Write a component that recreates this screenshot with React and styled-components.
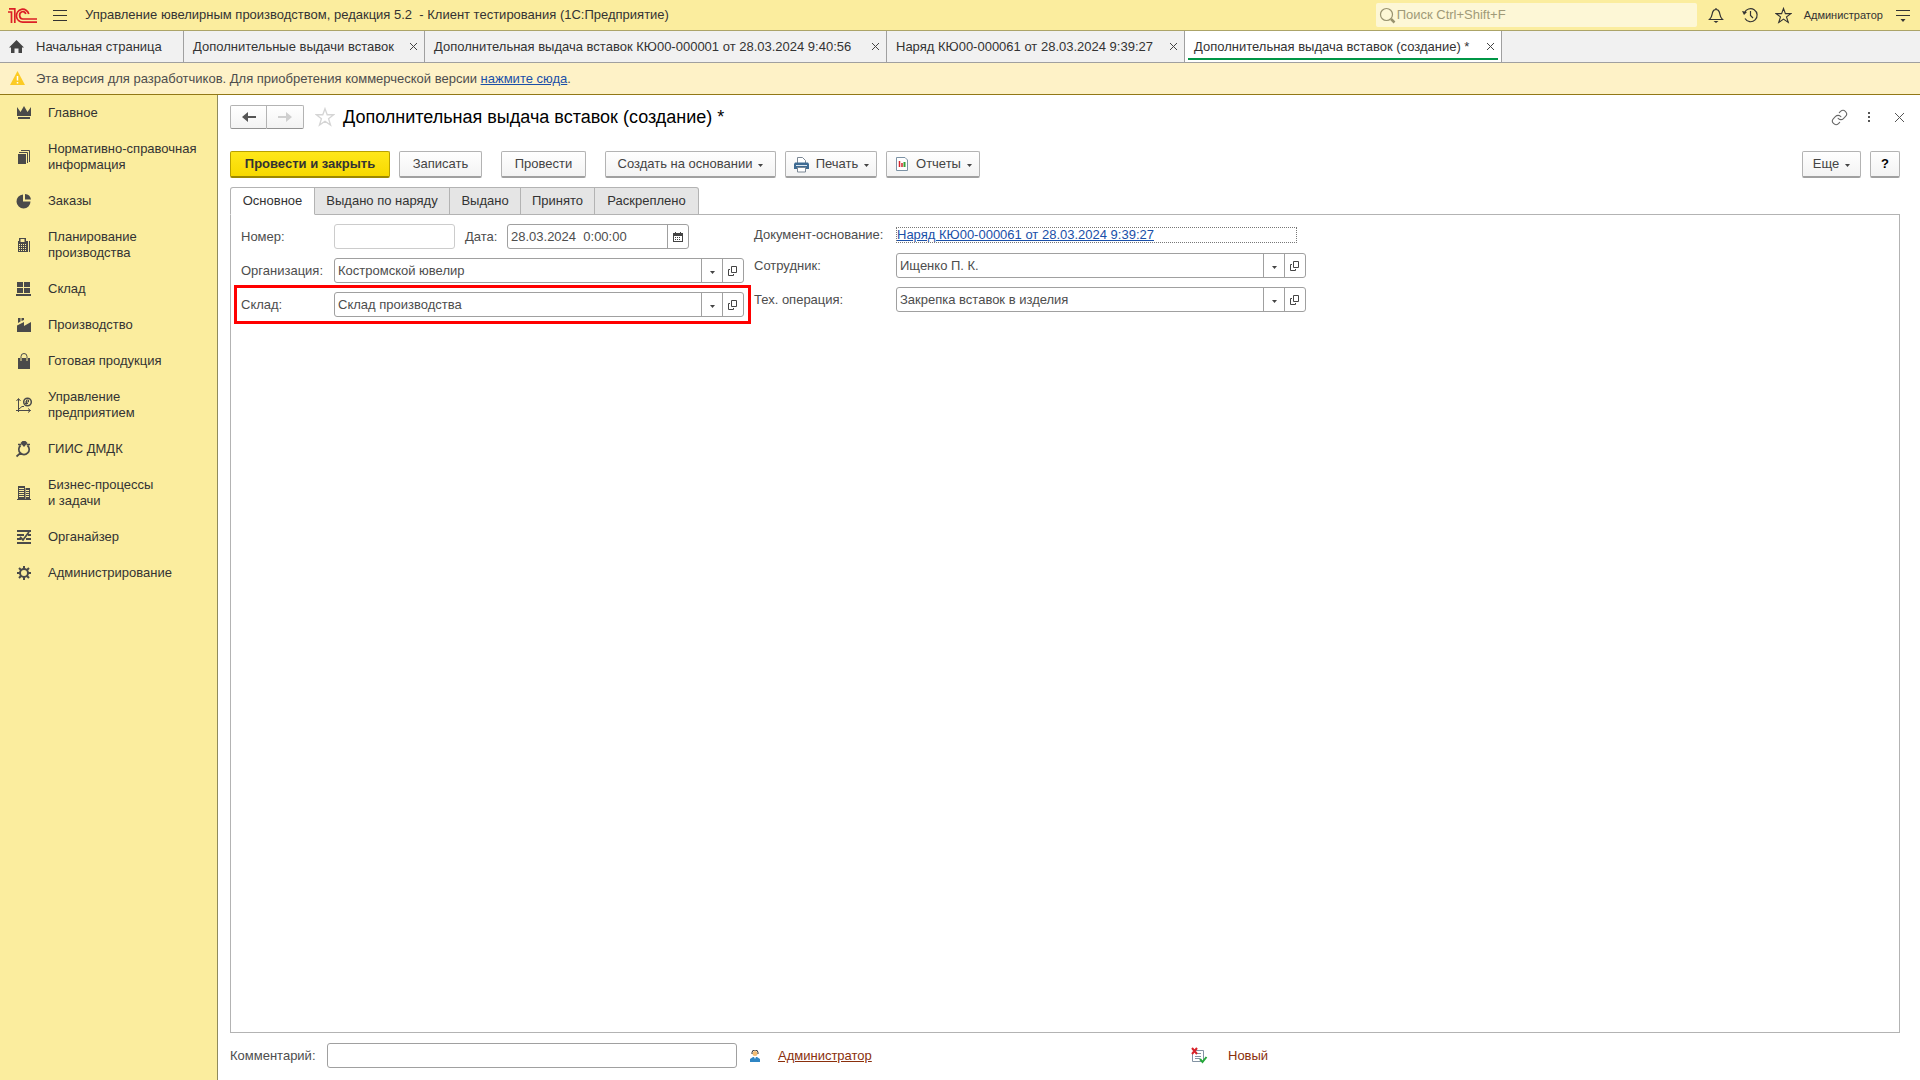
import React from 'react';
import styled, { createGlobalStyle } from 'styled-components';
import { Link as ChainIcon } from 'lucide-react';

const GlobalStyle = createGlobalStyle`
  * { box-sizing: border-box; }
  body {
    margin: 0;
    font-family: "Liberation Sans", Arial, sans-serif;
    font-size: 13px;
    line-height: 16px;
    color: #333;
    background: #fff;
  }
  button, input { font: inherit; color: inherit; }
`;

const Page = styled.div`
  display: flex;
  flex-direction: column;
  min-height: 100vh;
`;

const TopBar = styled.header`
  display: flex;
  align-items: center;
  height: 31px;
  padding: 0 5px 0 8px;
  background: #fbed9e;
  border-bottom: 1px solid #aca468;
`;

const IconButton = styled.button`
  display: flex;
  align-items: center;
  justify-content: center;
  width: ${({ $width }) => $width || 24}px;
  height: 24px;
  padding: 0;
  border: 0;
  background: none;
  color: ${({ $color }) => $color || '#333'};
`;

const AppTitle = styled.span`
  flex: 1;
  margin-left: 3px;
  white-space: pre;
`;

const SearchBox = styled.label`
  display: flex;
  align-items: center;
  width: 321px;
  height: 24px;
  padding: 0 3px;
  margin-right: 7px;
  border-radius: 2px;
  background: #fdf7d6;
  color: #98926f;
`;

const SearchInput = styled.input`
  flex: 1;
  min-width: 0;
  padding: 0 0 0 1px;
  border: 0;
  background: none;
  &::placeholder { color: #a09a78; opacity: 1; }
`;

const UserButton = styled.button`
  padding: 0 8px;
  border: 0;
  background: none;
  font-size: 11px;
`;

const WindowTabs = styled.nav`
  display: flex;
  height: 32px;
  background: #f1f1f1;
  border-bottom: 1px solid #a0a0a0;
`;

const WindowTab = styled.div`
  position: relative;
  display: flex;
  align-items: center;
  justify-content: space-between;
  min-width: ${({ $width }) => $width}px;
  padding: 0 3px 0 9px;
  border-right: 1px solid #a0a0a0;
  background: ${({ $active }) => ($active ? '#fff' : 'transparent')};
  &::after {
    content: '';
    display: ${({ $active }) => ($active ? 'block' : 'none')};
    position: absolute;
    left: 3px;
    right: 3px;
    bottom: 2px;
    height: 2px;
    background: #009646;
  }
`;

const TabLink = styled.a`
  display: flex;
  align-items: center;
  gap: 12px;
  color: #333;
  text-decoration: none;
  white-space: nowrap;
`;

const TabClose = styled.button`
  display: flex;
  align-items: center;
  justify-content: center;
  width: 16px;
  height: 16px;
  padding: 0;
  border: 0;
  background: none;
  color: #444;
`;

const Notice = styled.div`
  display: flex;
  align-items: center;
  gap: 11px;
  height: 32px;
  padding: 0 10px;
  background: #fef2c7;
  border-bottom: 1px solid #927816;
  color: #4d4d4d;
`;

const Link = styled.a`
  color: ${({ $color }) => $color || '#1a4fa8'};
  text-decoration: underline;
`;

const Body = styled.div`
  display: flex;
  flex: 1;
`;

const Sidebar = styled.nav`
  width: 218px;
  flex-shrink: 0;
  background: #fbed9e;
  border-right: 1px solid #8f8a5c;
`;

const SideLink = styled.a`
  display: flex;
  align-items: center;
  gap: 15px;
  padding: 10px 12px 10px 15px;
  color: #333;
  text-decoration: none;
  white-space: pre-line;
  svg {
    flex-shrink: 0;
    margin: -1px 0;
  }
`;

const Main = styled.main`
  display: flex;
  flex: 1;
  flex-direction: column;
  min-width: 0;
  padding: 10px 20px 12px 12px;
`;

const HeaderRow = styled.div`
  display: flex;
  align-items: center;
  height: 24px;
`;

const NavButtons = styled.div`
  display: flex;
  margin-right: 10px;
`;

const NavButton = styled.button`
  display: flex;
  align-items: center;
  justify-content: center;
  width: 37px;
  height: 24px;
  padding: 0;
  border: 1px solid #b3b3b3;
  border-bottom-color: #929292;
  border-radius: ${({ $last }) => ($last ? '0 2px 2px 0' : '2px 0 0 2px')};
  border-left-width: ${({ $last }) => ($last ? 0 : 1)}px;
  background: linear-gradient(#fff, #f3f3f3);
  color: ${({ $last }) => ($last ? '#cfcfcf' : '#555')};
`;

const Title = styled.h1`
  flex: 1;
  margin: 0 0 0 7px;
  font-size: 18px;
  line-height: 22px;
  font-weight: normal;
  color: #000;
`;

const HeaderTools = styled.div`
  display: flex;
  gap: 6px;
  margin-right: -11px;
`;

const Toolbar = styled.div`
  display: flex;
  align-items: center;
  gap: 9px;
  margin: 22px 0 9px;
`;

const Button = styled.button`
  display: flex;
  align-items: center;
  justify-content: center;
  gap: 6px;
  min-width: ${({ $width }) => $width}px;
  height: 27px;
  padding: 0 6px;
  margin-left: ${({ $apart }) => ($apart ? 10 : 0)}px;
  border: 1px solid #b3b3b3;
  border-bottom: 2px solid #a0a0a0;
  border-radius: 2px;
  background: linear-gradient(#fff, #f3f3f3);
  color: #444;
  white-space: nowrap;
`;

const PrimaryButton = styled(Button)`
  border-color: #b8a000;
  border-bottom-color: #9c8800;
  background: linear-gradient(#ffe71a, #f7d900);
  color: #333;
  font-weight: bold;
`;

const HelpButton = styled(Button)`
  color: #000;
  font-weight: bold;
`;

const Spacer = styled.div`
  flex: 1;
`;

const FormTabs = styled.div`
  display: flex;
  position: relative;
  margin-bottom: -1px;
`;

const FormTab = styled.button`
  min-width: ${({ $width }) => $width}px;
  height: 28px;
  padding: 0;
  border: 1px solid #b3b3b3;
  border-bottom-color: ${({ $active }) => ($active ? '#fff' : '#b3b3b3')};
  border-left-width: ${({ $first }) => ($first ? 1 : 0)}px;
  border-radius: ${({ $first, $last }) => ($first ? '3px 0 0 0' : $last ? '0 3px 0 0' : 0)};
  background: ${({ $active }) => ($active ? '#fff' : '#e5e5e5')};
`;

const Panel = styled.section`
  display: flex;
  flex: 1;
  align-items: flex-start;
  border: 1px solid #b3b3b3;
  padding: 9px 3px;
`;

const Column = styled.div`
  display: flex;
  flex-direction: column;
  width: ${({ $width }) => $width}px;
`;

const Row = styled.div`
  display: flex;
  align-items: center;
  height: ${({ $height }) => $height}px;
  padding: 0 ${({ $narrow }) => ($narrow ? 3 : 7)}px;
  color: #4d4d4d;
`;

const MarkedRow = styled(Row)`
  height: 39px;
  margin-top: -7px;
  padding: 0 4px;
  border: 3px solid #f00;
`;

const Label = styled.label`
  width: ${({ $width }) => $width}px;
  margin-left: ${({ $gap }) => $gap || 0}px;
  flex-shrink: 0;
  white-space: nowrap;
`;

const Field = styled.div`
  display: flex;
  width: ${({ $width }) => $width}px;
  height: 25px;
  border: 1px solid ${({ $light }) => ($light ? '#ccc' : '#a0a0a0')};
  border-radius: 3px;
  background: #fff;
`;

const Input = styled.input`
  flex: 1;
  min-width: 0;
  padding: 0 3px;
  border: 0;
  background: none;
  outline: none;
`;

const FieldButton = styled.button`
  display: flex;
  align-items: center;
  justify-content: center;
  width: 21px;
  padding: 0;
  border: 0;
  border-left: 1px solid #a0a0a0;
  background: none;
  color: #444;
`;

const BaseLink = styled(Link)`
  width: 401px;
  height: 16px;
  border: 1px dotted #777;
  line-height: 14px;
`;

const Footer = styled.footer`
  display: flex;
  align-items: center;
  padding-top: 10px;
  color: #4d4d4d;
`;

const Author = styled.div`
  display: flex;
  align-items: center;
  gap: 17px;
  width: 442px;
  margin-left: 12px;
`;

const State = styled.div`
  display: flex;
  align-items: center;
  gap: 20px;
  color: #8a2f0c;
`;

const Svg = ({ size = 16, children, ...rest }) => (
  <svg width={size} height={size} viewBox={`0 0 ${size} ${size}`} fill="none" aria-hidden="true" {...rest}>
    {children}
  </svg>
);

const Caret = () => (
  <svg width="5" height="10" viewBox="0 0 5 10" aria-hidden="true">
    <path d="M0 5h5L2.500 8z" fill="#444" />
  </svg>
);

const CloseIcon = ({ size = 9 }) => (
  <Svg size={size} stroke="currentColor">
    <path d={`M1 1L${size - 1} ${size - 1}M${size - 1} 1L1 ${size - 1}`} />
  </Svg>
);

const LogoIcon = () => (
  <svg width="30" height="18" viewBox="0 0 30 18" fill="none" stroke="#dc1f26" strokeWidth="1.700" aria-hidden="true">
    <path d="M0 6H3.500V17M1 2.800H6.800V17" />
    <path d="M20.800 8A6.300 6.500 0 1 0 15 16.200H29" />
    <path d="M17.800 8A3.200 3.700 0 1 0 15 13H29" />
  </svg>
);

const StarIcon = ({ size = 18 }) => (
  <svg width={size} height={size} viewBox="0 0 18 18" fill="none" stroke="currentColor" strokeWidth="1.200" aria-hidden="true">
    <path d="M9 1.500L11 7H16.800L12.200 10.500L14 16.300L9 12.800L4 16.300L5.800 10.500L1.200 7H7z" />
  </svg>
);

const OpenIcon = () => (
  <Svg size={10} stroke="#444">
    <path d="M3.500 .5H8.500V6.500H3.500zM2 3.500H.5V9.500H5.500V8" />
  </Svg>
);

const sections = [
  {
    text: 'Главное',
    icon: <path d="M2 3L5.500 8L9 2L12.500 8L16 3V12H2zM3 13H15V15H3z" />,
  },
  {
    text: 'Нормативно-справочная\nинформация',
    icon: (
      <>
        <path d="M3 6H11V16H3z" />
        <path d="M4 4.500H12.500V15M6 2.500H14.500V14" fill="none" stroke="#4a4a4a" />
      </>
    ),
  },
  {
    text: 'Заказы',
    icon: <path d="M8 2.500V9.500H15.500A7 7 0 1 1 8 2.500zM10 2A6.500 6.500 0 0 1 16 7.500H10z" />,
  },
  {
    text: 'Планирование\nпроизводства',
    icon: (
      <>
        <path d="M4 2H11V5H13V16H3V5H4zM5.500 3V6H9.500V3z" fillRule="evenodd" />
        <path d="M14 5H15V16H14z" />
        <path d="M4 8.500H12M4 10.500H12M4 12.500H12M4 14.500H12" stroke="#fbed9e" strokeDasharray="1 1" />
      </>
    ),
  },
  {
    text: 'Склад',
    icon: <path d="M2 2H8V7H2zM9 2H15V7H9zM2 8H8V13H2zM9 8H15V13H9zM1 14H16V16H1z" />,
  },
  {
    text: 'Производство',
    icon: (
      <>
        <path d="M2 16V9.500L9 6V10L16 6V16z" />
        <path d="M3 2H5.500V5.500L3 7zM6.500 2H9V4L6.500 5z" />
      </>
    ),
  },
  {
    text: 'Готовая продукция',
    icon: (
      <>
        <path d="M3 6H15V17H3z" />
        <path d="M6 7V4.500A3 3 0 0 1 12 4.500V7" fill="none" stroke="#4a4a4a" />
        <path d="M6 6V9M12 6V9" stroke="#fbed9e" />
      </>
    ),
  },
  {
    text: 'Управление\nпредприятием',
    icon: (
      <>
        <path d="M3.500 16V3M1.500 5L3.500 2.500L5.500 5M1 14.500H15.500M13 12.500L15.500 14.500L13 16.500M4 13L7 10.500L9 10.500" fill="none" stroke="#4a4a4a" />
        <circle cx="12.500" cy="6" r="3.800" fill="none" stroke="#4a4a4a" strokeWidth="1.500" />
        <path d="M11.500 8.500V4H13.500V6H10M10 7.500H13" fill="none" stroke="#4a4a4a" />
      </>
    ),
  },
  {
    text: 'ГИИС ДМДК',
    icon: (
      <>
        <path d="M5.500 3L7.500 1H10.500L12.500 3L9 7z" />
        <path d="M5.500 5.500A5.200 5.200 0 1 0 12.500 5.500M5.500 13L1.500 16.500M3 4.500H6.500M11.500 4.500H15" fill="none" stroke="#4a4a4a" strokeWidth="1.700" />
      </>
    ),
  },
  {
    text: 'Бизнес-процессы\nи задачи',
    icon: (
      <>
        <path d="M3 2H10V4H15V15H16V16H2V15H3z" />
        <path d="M4 4.500H9M4 6.500H9M4 8.500H9M4 10.500H9M4 12.500H9M11 6.500H14M11 8.500H14M11 10.500H14M11 12.500H14" stroke="#fbed9e" />
        <path d="M10.500 4V15" stroke="#fbed9e" strokeWidth=".5" />
      </>
    ),
  },
  {
    text: 'Органайзер',
    icon: (
      <>
        <path d="M2 2H16V4H2zM2 6H9V8H2zM13 6H16V8H13zM2 10H6V12H2zM11 10H16V12H11zM2 14H16V16H2z" />
        <path d="M5 9L8 12L14 4" fill="none" stroke="#4a4a4a" strokeWidth="1.800" />
      </>
    ),
  },
  {
    text: 'Администрирование',
    icon: (
      <>
        <circle cx="9" cy="9" r="4" fill="none" stroke="#4a4a4a" strokeWidth="2" />
        <path d="M9 2V5M9 13V16M2 9H5M13 9H16M4 4L6 6M12 12L14 14M4 14L6 12M12 6L14 4" stroke="#4a4a4a" strokeWidth="2" />
      </>
    ),
  },
];

const windows = [
  { text: 'Дополнительные выдачи вставок', width: 241 },
  { text: 'Дополнительная выдача вставок КЮ00-000001 от 28.03.2024 9:40:56', width: 462 },
  { text: 'Наряд КЮ00-000061 от 28.03.2024 9:39:27', width: 298 },
  { text: 'Дополнительная выдача вставок (создание) *', width: 317 },
];

const formTabs = [
  { text: 'Основное', width: 85 },
  { text: 'Выдано по наряду', width: 135 },
  { text: 'Выдано', width: 71 },
  { text: 'Принято', width: 74 },
  { text: 'Раскреплено', width: 104 },
];

const RefField = ({ id, value }) => (
  <Field $width={410}>
    <Input id={id} defaultValue={value} />
    <FieldButton aria-label="Выбрать"><Caret /></FieldButton>
    <FieldButton aria-label="Открыть"><OpenIcon /></FieldButton>
  </Field>
);

const Header = () => (
  <TopBar>
    <LogoIcon />
    <IconButton $width={44} aria-label="Меню">
      <Svg size={14} stroke="#333"><path d="M0 2.500H14M0 7.500H14M0 12.500H14" /></Svg>
    </IconButton>
    <AppTitle>Управление ювелирным производством, редакция 5.2  - Клиент тестирования (1С:Предприятие)</AppTitle>
    <SearchBox>
      <Svg size={17} stroke="currentColor" strokeWidth="1.200">
        <circle cx="7.500" cy="7.500" r="6" />
        <path d="M12 12L15.500 15.500" strokeWidth="2.500" />
      </Svg>
      <SearchInput aria-label="Поиск" placeholder="Поиск Ctrl+Shift+F" />
    </SearchBox>
    <IconButton $width={24} aria-label="Уведомления">
      <Svg stroke="#333" strokeWidth="1.200">
        <path d="M1.500 12.500C4 10.500 4 8 4.500 5.500C5 3.500 6.500 2.500 8 2.500S11 3.500 11.500 5.500C12 8 12 10.500 14.500 12.500zM8 1V2.500" />
        <path d="M5.500 14H10.500L8 16z" fill="#333" stroke="none" />
      </Svg>
    </IconButton>
    <IconButton $width={44} aria-label="История">
      <Svg stroke="#333" strokeWidth="1.200">
        <path d="M2.500 6A6.500 6.500 0 1 1 3 11.500M8.500 4V8.500L11 11" />
        <path d="M0 4L5 5L2 8z" fill="#333" stroke="none" />
      </Svg>
    </IconButton>
    <IconButton $width={24} aria-label="Избранное"><StarIcon size={17} /></IconButton>
    <UserButton>Администратор</UserButton>
    <IconButton $width={24} aria-label="Настройки">
      <Svg stroke="#333">
        <path d="M1 3.500H15M1 8.500H15" />
        <path d="M5.500 12H10.500L8 15z" fill="#333" stroke="none" />
      </Svg>
    </IconButton>
  </TopBar>
);

const App = () => (
  <Page>
    <GlobalStyle />
    <Header />
    <WindowTabs>
      <WindowTab $width={184}>
        <TabLink href="#home">
          <Svg size={15}><path d="M7.500 1L15 8.500H13V14H9.500V9.500H5.500V14H2V8.500H0z" fill="#444" /></Svg>
          Начальная страница
        </TabLink>
      </WindowTab>
      {windows.map(({ text, width }, i) => (
        <WindowTab key={text} $width={width} $active={i === windows.length - 1}>
          <TabLink href="#window">{text}</TabLink>
          <TabClose aria-label="Закрыть"><CloseIcon /></TabClose>
        </WindowTab>
      ))}
    </WindowTabs>
    <Notice>
      <Svg size={15}>
        <path d="M7.500 0L15 14H0z" fill="#fccb24" />
        <path d="M7.500 5V9.500M7.500 11V12.500" stroke="#fff" strokeWidth="1.500" />
      </Svg>
      <span>
        Эта версия для разработчиков. Для приобретения коммерческой версии <Link href="#buy">нажмите сюда</Link>.
      </span>
    </Notice>
    <Body>
      <Sidebar>
        {sections.map(({ text, icon }) => (
          <SideLink key={text} href="#section">
            <Svg size={18} fill="#4a4a4a">{icon}</Svg>
            {text}
          </SideLink>
        ))}
      </Sidebar>
      <Main>
        <HeaderRow>
          <NavButtons>
            <NavButton aria-label="Назад">
              <Svg size={14}><path d="M0 7L6 2V6H14V8H6V12z" fill="currentColor" /></Svg>
            </NavButton>
            <NavButton $last aria-label="Вперед">
              <Svg size={14}><path d="M14 7L8 2V6H0V8H8V12z" fill="currentColor" /></Svg>
            </NavButton>
          </NavButtons>
          <IconButton $width={22} $color="#d5d5d5" aria-label="В избранное"><StarIcon size={20} /></IconButton>
          <Title>Дополнительная выдача вставок (создание) *</Title>
          <HeaderTools>
            <IconButton $color="#666" aria-label="Ссылка"><ChainIcon size={17} strokeWidth={1.5} /></IconButton>
            <IconButton aria-label="Действия">
              <Svg size={14} fill="#555"><path d="M6 2H8V4H6zM6 6H8V8H6zM6 10H8V12H6z" /></Svg>
            </IconButton>
            <IconButton $color="#555" aria-label="Закрыть"><CloseIcon size={11} /></IconButton>
          </HeaderTools>
        </HeaderRow>
        <Toolbar>
          <PrimaryButton $width={160}>Провести и закрыть</PrimaryButton>
          <Button $width={83}>Записать</Button>
          <Button $width={85} $apart>Провести</Button>
          <Button $width={171} $apart>Создать на основании <Caret /></Button>
          <Button $width={92}>
            <Svg size={17}>
              <path d="M4.500 7V1.500H9.500L12.500 4.500V7" fill="#fff" stroke="#7b8794" />
              <path d="M2 6.500H15L16 8V13H1V8z" fill="#3d6a92" />
              <path d="M3 9.500H14" stroke="#dbe6f0" />
              <path d="M4.500 11.500H12.500V16H4.500z" fill="#fff" stroke="#7b8794" />
            </Svg>
            Печать <Caret />
          </Button>
          <Button $width={94}>
            <Svg>
              <path d="M2.500 1.500H11L13.500 4V14.500H2.500z" fill="#fff" stroke="#7c92a5" />
              <path d="M5.500 5V11M8 7V11" stroke="#d4252c" strokeWidth="1.500" />
              <path d="M10.500 6V11" stroke="#36a136" strokeWidth="2" />
            </Svg>
            Отчеты <Caret />
          </Button>
          <Spacer />
          <Button $width={59}>Еще <Caret /></Button>
          <HelpButton $width={30}>?</HelpButton>
        </Toolbar>
        <FormTabs>
          {formTabs.map(({ text, width }, i) => (
            <FormTab key={text} $width={width} $active={i === 0} $first={i === 0} $last={i === formTabs.length - 1}>
              {text}
            </FormTab>
          ))}
        </FormTabs>
        <Panel>
          <Column $width={517}>
            <Row $height={25}>
              <Label htmlFor="number" $width={93}>Номер:</Label>
              <Field $width={121} $light><Input id="number" /></Field>
              <Label htmlFor="date" $width={42} $gap={10}>Дата:</Label>
              <Field $width={182}>
                <Input id="date" defaultValue="28.03.2024  0:00:00" />
                <FieldButton aria-label="Календарь">
                  <Svg size={10}>
                    <path d="M0 1H10V10H0zM1 4V9H9V4z" fill="#444" fillRule="evenodd" />
                    <path d="M2.500 0V2M7.500 0V2" stroke="#444" />
                    <path d="M2 5.500H8M2 7.500H8" stroke="#444" strokeDasharray="1 1" />
                  </Svg>
                </FieldButton>
              </Field>
            </Row>
            <Row $height={43}>
              <Label htmlFor="org" $width={93}>Организация:</Label>
              <RefField id="org" value="Костромской ювелир" />
            </Row>
            <MarkedRow>
              <Label htmlFor="store" $width={93}>Склад:</Label>
              <RefField id="store" value="Склад производства" />
            </MarkedRow>
          </Column>
          <Column>
            <Row $height={21} $narrow>
              <Label as="span" $width={142}>Документ-основание:</Label>
              <BaseLink href="#base">Наряд КЮ00-000061 от 28.03.2024 9:39:27</BaseLink>
            </Row>
            <Row $height={41} $narrow>
              <Label htmlFor="employee" $width={142}>Сотрудник:</Label>
              <RefField id="employee" value="Ищенко П. К." />
            </Row>
            <Row $height={27} $narrow>
              <Label htmlFor="operation" $width={142}>Тех. операция:</Label>
              <RefField id="operation" value="Закрепка вставок в изделия" />
            </Row>
          </Column>
        </Panel>
        <Footer>
          <Label htmlFor="comment" $width={97}>Комментарий:</Label>
          <Field $width={410}><Input id="comment" /></Field>
          <Author>
            <Svg size={12}>
              <circle cx="6" cy="3.500" r="2.500" fill="#f2bc73" />
              <path d="M3 4V2.500A3 2.500 0 0 1 9 2.500V4" stroke="#333" />
              <path d="M1 12V9L4 7H8L11 9V12z" fill="#2f86c4" />
              <path d="M5 7H7L6 9z" fill="#fff" />
            </Svg>
            <Link href="#author" $color="#8a2f0c">Администратор</Link>
          </Author>
          <State>
            <Svg size={17}>
              <path d="M3.500 3.500H12.500V14.500H1.500V7" fill="#fff" stroke="#8393a3" />
              <path d="M6 6.500H10M4 9.500H10M4 11.500H9" stroke="#8393a3" />
              <path d="M1 1L6 7M6 1L1 7" stroke="#d8232a" strokeWidth="2" />
              <path d="M9 12L11.500 15L15.500 10" stroke="#25a83a" strokeWidth="2" />
            </Svg>
            Новый
          </State>
        </Footer>
      </Main>
    </Body>
  </Page>
);

export default App;
